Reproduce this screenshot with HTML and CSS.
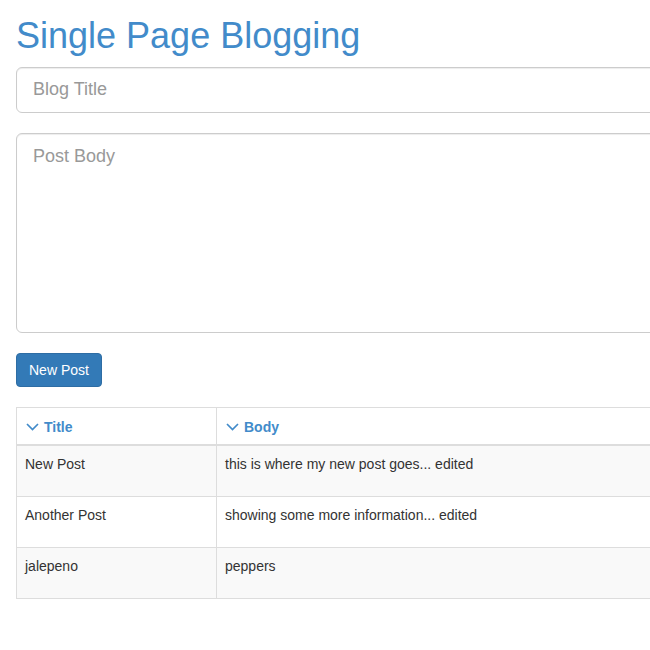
FILE: index.html
```html
<!DOCTYPE html>
<html>
<head>
<meta charset="utf-8">
<link rel="stylesheet" href="styles.css">
</head>
<body>
<div class="page">
  <h1 class="title">Single Page Blogging</h1>
  <form class="post-form">
    <input class="field field-input" type="text" placeholder="Blog Title">
    <textarea class="field field-area" placeholder="Post Body"></textarea>
    <button class="btn-primary" type="button">New Post</button>
  </form>
  <table class="posts">
    <thead>
      <tr>
        <th class="col-title"><span class="sort"><svg class="chev" width="13" height="8" viewBox="0 0 13 8"><polyline points="1,1 6.5,6.5 12,1" fill="none" stroke="currentColor" stroke-width="1.7"/></svg>Title</span></th>
        <th><span class="sort"><svg class="chev" width="13" height="8" viewBox="0 0 13 8"><polyline points="1,1 6.5,6.5 12,1" fill="none" stroke="currentColor" stroke-width="1.7"/></svg>Body</span></th>
      </tr>
    </thead>
    <tbody>
      <tr class="odd"><td>New Post</td><td>this is where my new post goes... edited</td></tr>
      <tr><td>Another Post</td><td>showing some more information... edited</td></tr>
      <tr class="odd"><td>jalepeno</td><td>peppers</td></tr>
    </tbody>
  </table>
</div>
</body>
</html>
```
FILE: styles.css
```css
html, body {
  margin: 0;
  overflow: hidden;
}
body {
  font-family: "Liberation Sans", Arial, sans-serif;
  font-size: 14px;
  line-height: 20px;
  color: #333;
  background: #fff;
}
.page {
  width: 1170px;
  padding: 0 16px;
}
.title {
  margin: 16px 0 11px;
  font-size: 36px;
  line-height: 39.6px;
  font-weight: 400;
  color: #428bca;
}
.post-form {
  display: flex;
  flex-direction: column;
  align-items: flex-start;
  gap: 20px;
  margin-bottom: 20px;
}
.field {
  box-sizing: border-box;
  width: 100%;
  border: 1px solid #ccc;
  border-radius: 6px;
  padding: 10px 16px;
  font-family: "Liberation Sans", Arial, sans-serif;
  font-size: 18px;
  line-height: 24px;
  color: #555;
  box-shadow: inset 0 1px 1px rgba(0,0,0,.075);
  margin: 0;
}
.field::placeholder { color: #999; }
.field-input { height: 46px; }
.field-area { height: 200px; resize: none; display: block; }
.btn-primary {
  height: 34px;
  padding: 6px 12px;
  font-family: "Liberation Sans", Arial, sans-serif;
  font-size: 14px;
  line-height: 20px;
  color: #fff;
  background: #337ab7;
  border: 1px solid #2e6da4;
  border-radius: 4px;
}
.posts {
  width: 100%;
  border-collapse: collapse;
  border: 1px solid #ddd;
}
.posts th, .posts td {
  border: 1px solid #ddd;
  text-align: left;
  vertical-align: top;
}
.posts th {
  padding: 8px 8px 7px;
  border-bottom: 2px solid #ddd;
  font-weight: 700;
  color: #428bca;
}
.col-title { width: 183px; }
.sort {
  display: inline-flex;
  align-items: center;
  gap: 5px;
}
.chev { display: block; margin-left: 1px; }
.posts td {
  padding: 8px 8px 22px;
}
.posts tr.odd td { background: #f9f9f9; }
```
